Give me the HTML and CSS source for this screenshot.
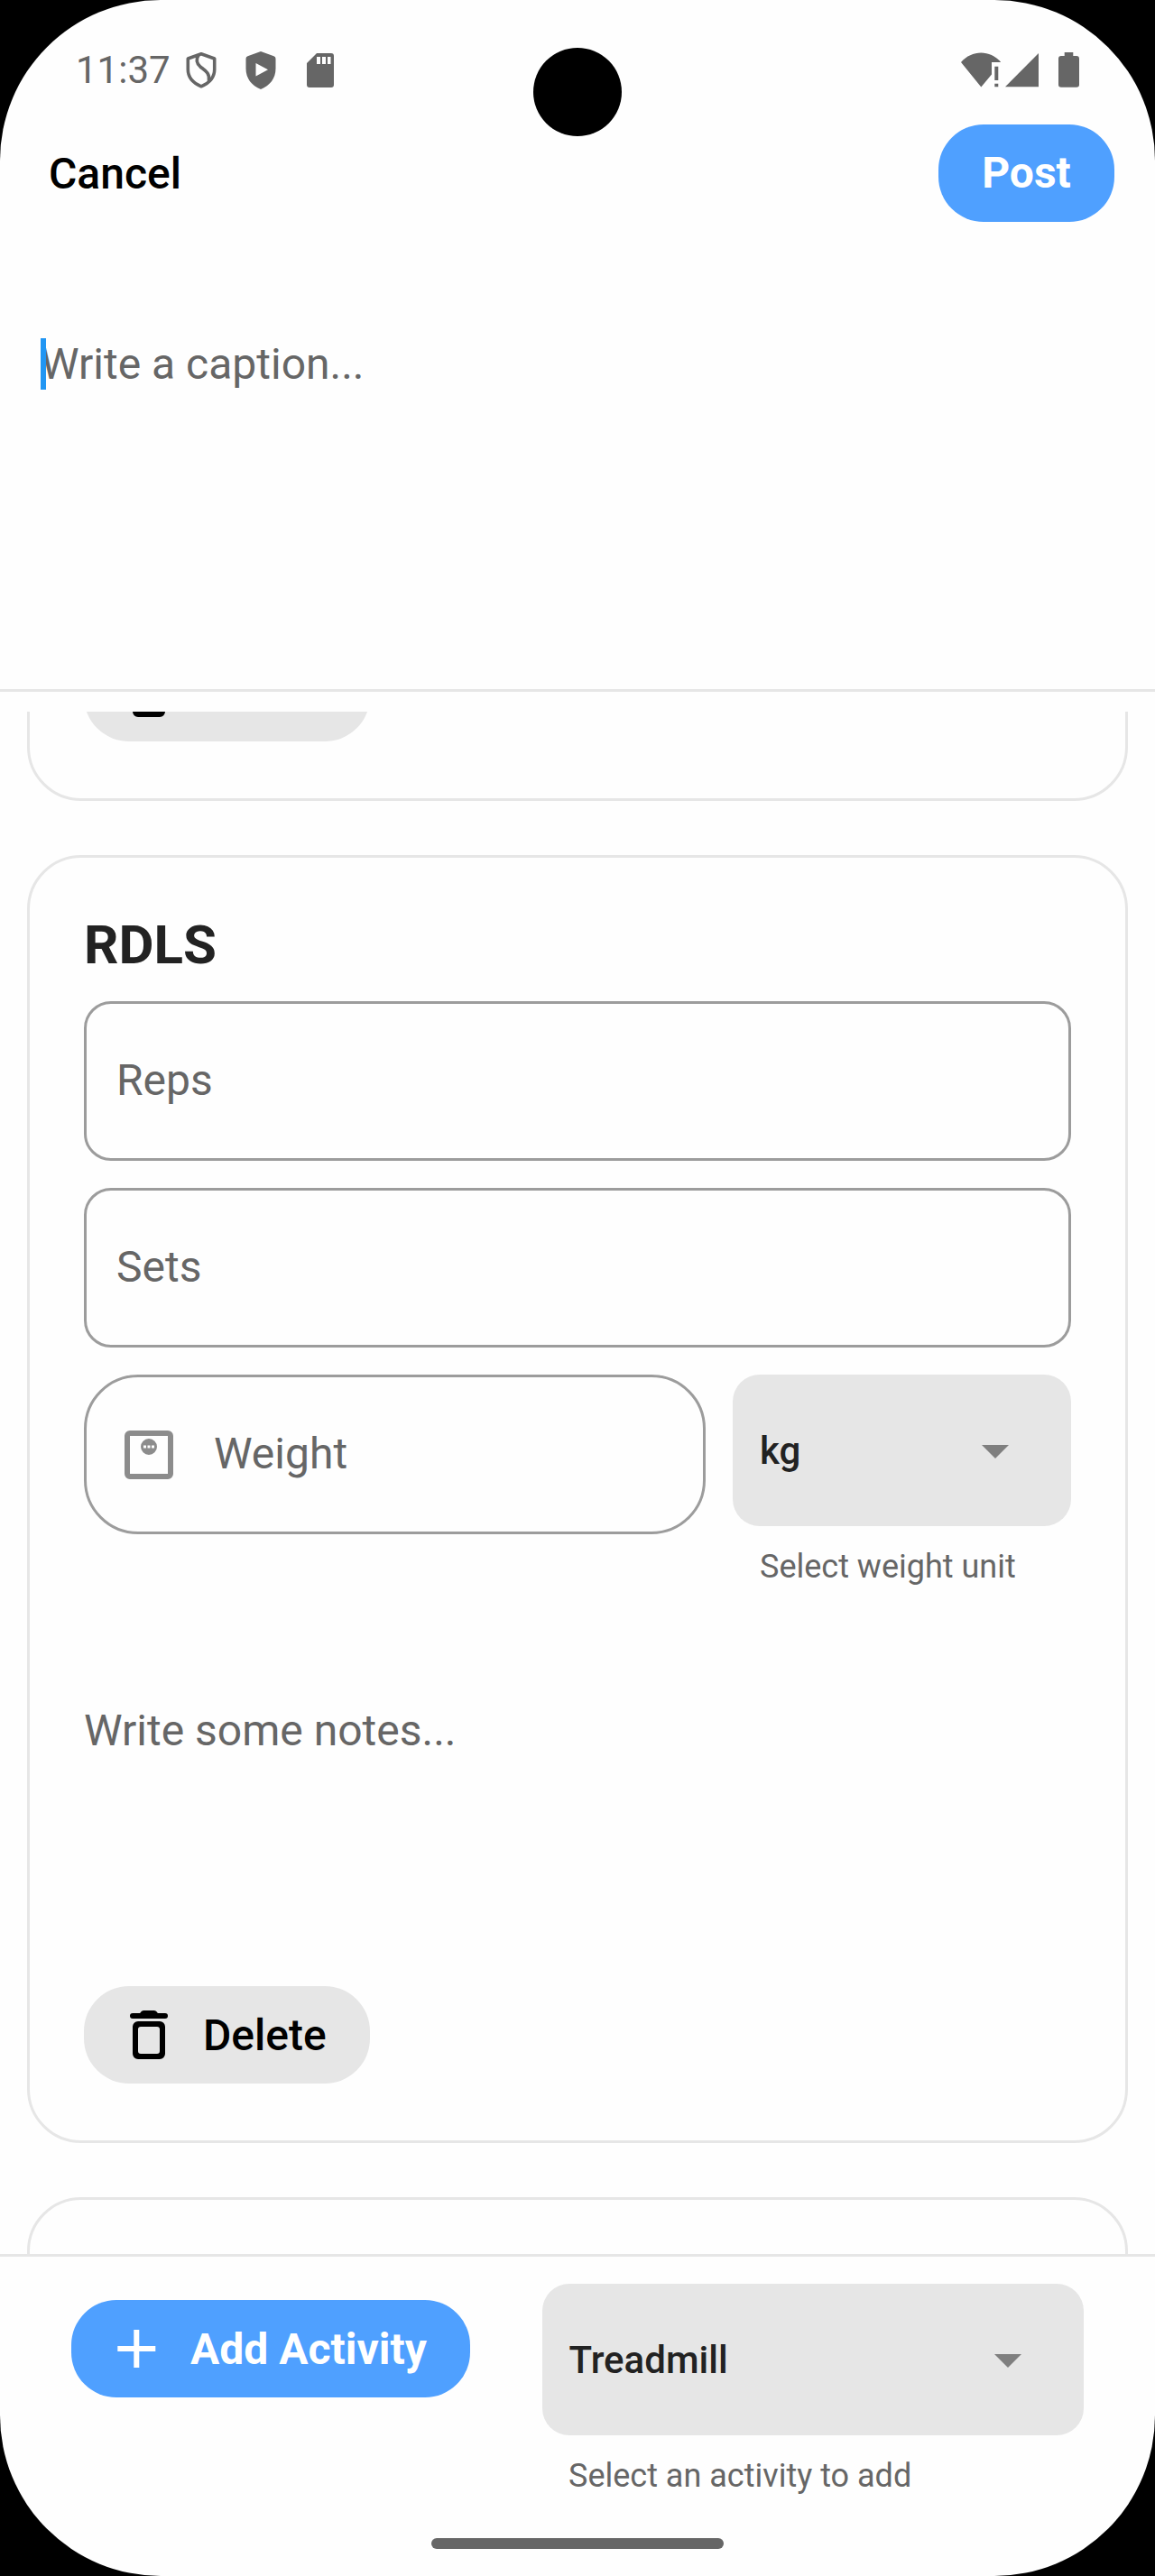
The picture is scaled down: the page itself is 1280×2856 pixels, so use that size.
FILE: index.html
```html
<!DOCTYPE html>
<html lang="en">
<head>
<meta charset="utf-8">
<title>New post</title>
<link rel="stylesheet" href="styles.css">
</head>
<body>
<div class="screen">
  <div class="camera"></div>

  <header class="status">
    <span class="clock">11:37</span>
    <svg class="st-icon st-shield" viewBox="0 0 34 42" width="34" height="42"><g fill="none" stroke="#666" stroke-width="3.6"><path d="M17 2.800 2.300 8V20C2.300 28.500 8 35 17 38.800C26 35 31.700 28.500 31.700 20V8Z" stroke-linejoin="round"/><path d="M14 4C11 9 11.500 13 16 17C21 21 27 24 25.500 33"/></g></svg>
    <svg class="st-icon st-play" viewBox="0 0 34 42" width="34" height="42"><path fill="#666" fill-rule="evenodd" d="M17 0 31.500 5.200Q33.500 6 33.500 8V19C33.500 30 27 38 17 42C7 38 .5 30 .5 19V8Q.5 6 2.500 5.200ZM11.500 13V27.500L25 20.300Z"/></svg>
    <svg class="st-icon st-card" viewBox="0 0 30 38" width="30" height="38"><path fill="#666" fill-rule="evenodd" d="M11 0H27Q30 0 30 3V35Q30 38 27 38H3Q0 38 0 35V11ZM11 4V12H15V4ZM17 4V12H21V4ZM23 4V12H26.500V4Z"/></svg>
    <svg class="st-right" viewBox="0 0 131 40" width="131" height="40"><g fill="#666"><path d="M0 11C12-3 32-3 44 10.500L43.500 11H34V24.500L22.300 38.500Z"/><path d="M37.300 15.700H41.300V31H37.300ZM37.300 34.700H41.300V38.300H37.300Z"/><path d="M86 1V38.300H49Z"/><path d="M114.700 0H124.300V4H128Q131 4 131 7V36Q131 38.700 128 38.700H111Q108 38.700 108 36V7Q108 4 111 4H114.700Z"/></g></svg>
  </header>

  <nav class="topbar">
    <span class="cancel">Cancel</span>
    <button class="btn btn-primary btn-post">Post</button>
  </nav>

  <section class="caption">
    <span class="caret"></span><span class="ph">Write a caption...</span>
  </section>

  <main class="list">
    <article class="card card-prev">
      <button class="btn btn-tonal">
        <svg class="ic" viewBox="0 0 24 24"><path d="M6 4A1 1 0 0 0 6 6H18A1 1 0 0 0 18 4H15.300Q14.700 3 14 3H10Q9.300 3 8.700 4Z"/><path fill-rule="evenodd" d="M8 7H16A2 2 0 0 1 18 9V19A2 2 0 0 1 16 21H8A2 2 0 0 1 6 19V9A2 2 0 0 1 8 7ZM9 9A1 1 0 0 0 8 10V18A1 1 0 0 0 9 19H15A1 1 0 0 0 16 18V10A1 1 0 0 0 15 9Z"/></svg>
      </button>
    </article>

    <article class="card">
      <h2 class="card-title">RDLS</h2>
      <div class="field">Reps</div>
      <div class="field">Sets</div>
      <div class="row">
        <div class="field field-round">
          <svg class="ic ic-weight" viewBox="0 0 24 24"><path fill-rule="evenodd" d="M5 3H19A2 2 0 0 1 21 5V19A2 2 0 0 1 19 21H5A2 2 0 0 1 3 19V5A2 2 0 0 1 5 3ZM5 5V19H19V5Z"/><path fill-rule="evenodd" d="M12 6A3 3 0 0 1 12 12A3 3 0 0 1 12 6ZM10 8.500V9.500H11V8.500ZM11.500 8.500V9.500H12.500V8.500ZM13 8.500V9.500H14V8.500Z"/></svg>
          <span>Weight</span>
        </div>
        <div class="picker">
          <div class="select"><span>kg</span><svg class="ic ic-drop" viewBox="0 0 24 24"><path d="M7 10 12 15 17 10Z"/></svg></div>
          <div class="hint">Select weight unit</div>
        </div>
      </div>
      <div class="notes">Write some notes...</div>
      <button class="btn btn-tonal">
        <svg class="ic" viewBox="0 0 24 24"><path d="M6 4A1 1 0 0 0 6 6H18A1 1 0 0 0 18 4H15.300Q14.700 3 14 3H10Q9.300 3 8.700 4Z"/><path fill-rule="evenodd" d="M8 7H16A2 2 0 0 1 18 9V19A2 2 0 0 1 16 21H8A2 2 0 0 1 6 19V9A2 2 0 0 1 8 7ZM9 9A1 1 0 0 0 8 10V18A1 1 0 0 0 9 19H15A1 1 0 0 0 16 18V10A1 1 0 0 0 15 9Z"/></svg>
        <span>Delete</span>
      </button>
    </article>

    <article class="card card-next"></article>
  </main>

  <footer class="footer">
    <button class="btn btn-primary btn-add">
      <svg class="ic" viewBox="0 0 24 24"><path d="M19.100 13H13.100V19H11.100V13H5.100V11H11.100V5H13.100V11H19.100Z"/></svg>
      <span>Add Activity</span>
    </button>
    <div class="picker picker-activity">
      <div class="select"><span>Treadmill</span><svg class="ic ic-drop" viewBox="0 0 24 24"><path d="M7 10 12 15 17 10Z"/></svg></div>
      <div class="hint">Select an activity to add</div>
    </div>
  </footer>
  <div class="home-bar"></div>
</div>
</body>
</html>
```
FILE: styles.css
```css
* { box-sizing: border-box; }

body {
  margin: 0;
  background: #000;
  font-family: Roboto, sans-serif;
  font-size: 48px;
  color: #666;
}

.screen {
  position: relative;
  display: flex;
  flex-direction: column;
  width: 1280px;
  height: 2856px;
  overflow: hidden;
  border-radius: 178px;
  background: #fefefe;
}

.camera {
  position: absolute;
  left: 591px;
  top: 53px;
  width: 98px;
  height: 98px;
  border-radius: 50%;
  background: #000;
}

/* status bar */
.status {
  display: flex;
  align-items: flex-start;
  height: 138px;
  padding: 57px 84px 0 84px;
}
.clock {
  width: 122px;
  font-size: 42px;
  line-height: 42px;
}
.st-icon { flex: none; }
.st-play { margin-left: 32px; }
.st-card { margin: 2px 0 0 34px; }
.st-right { margin: 1px 0 0 auto; }

/* top bar */
.topbar {
  display: flex;
  justify-content: space-between;
  align-items: center;
  height: 108px;
  padding: 0 45px 0 54px;
}
.cancel {
  font-weight: 500;
  color: #000;
}

.btn {
  display: inline-flex;
  align-items: center;
  height: 108px;
  margin: 0;
  padding: 0 48px 0 36px;
  gap: 24px;
  border: 0;
  border-radius: 50px;
  font: 500 48px/56px Roboto, sans-serif;
}
.btn span { margin-top: 1px; }
.btn-tonal {
  width: 317px;
  background: #e6e6e6;
  color: #000;
}
.btn-primary {
  background: #4fa0ff;
  color: #fff;
  font-weight: 700;
}
.btn-post { width: 195px; padding: 0; justify-content: center; }
.btn-add { width: 442px; }

.ic {
  flex: none;
  width: 72px;
  height: 72px;
  fill: currentColor;
}

/* caption */
.caption {
  position: relative;
  height: 521px;
  padding: 129px 45px 0;
  border-bottom: 3px solid #e6e6e6;
}
.ph { display: block; line-height: 57px; }
.caret {
  position: absolute;
  left: 45px;
  top: 129px;
  width: 6px;
  height: 57px;
  background: #2196f3;
}

/* activity list */
.list {
  display: flex;
  flex-direction: column;
  gap: 60px;
  height: 1710px;
  margin-top: 22px;
  padding: 0 30px;
  overflow: hidden;
}
.card {
  flex: none;
  height: 1428px;
  padding: 60px;
  border: 3px solid #e6e6e6;
  border-radius: 60px;
}
.card-prev {
  display: flex;
  align-items: flex-end;
  height: 400px;
  margin-top: -301px;
  padding-bottom: 63px;
}
.card-next { height: 200px; }
.card-title {
  margin: 0 0 26px;
  font-size: 60px;
  font-weight: 700;
  line-height: 73px;
  color: #222;
}
.field {
  display: flex;
  align-items: center;
  height: 177px;
  margin-bottom: 30px;
  padding: 0 33px 2px;
  border: 3px solid #9c9c9c;
  border-radius: 30px;
}
.row {
  display: flex;
  gap: 30px;
}
.field-round {
  flex: 1;
  gap: 36px;
  padding: 0 33px;
  border-radius: 60px;
}
.field-round span { padding-bottom: 2px; }
.ic-weight { fill: #8c8c8c; }

.picker { width: 375px; }
.select {
  display: flex;
  align-items: center;
  justify-content: space-between;
  height: 168px;
  padding: 0 48px 0 30px;
  border-radius: 30px;
  background: #e6e6e6;
  font-size: 42px;
  font-weight: 500;
  color: #222;
}
.ic-drop { fill: #7f7f7f; }
.hint {
  padding: 21px 30px 0;
  font-size: 36px;
  line-height: 48px;
  white-space: nowrap;
}
.notes {
  height: 311px;
  margin-top: 130px;
  line-height: 56px;
}

/* footer */
.footer {
  display: flex;
  align-items: flex-start;
  gap: 80px;
  height: 315px;
  padding: 30px 79px 0;
  border-top: 3px solid #e6e6e6;
}
.btn-add { margin-top: 18px; }
.picker-activity { width: 600px; }
.picker-activity .select { padding-left: 29.5px; }
.picker-activity .hint { padding-left: 29px; }

.home-bar {
  width: 324px;
  height: 12px;
  margin: 0 auto;
  border-radius: 6px;
  background: #666;
}
```
